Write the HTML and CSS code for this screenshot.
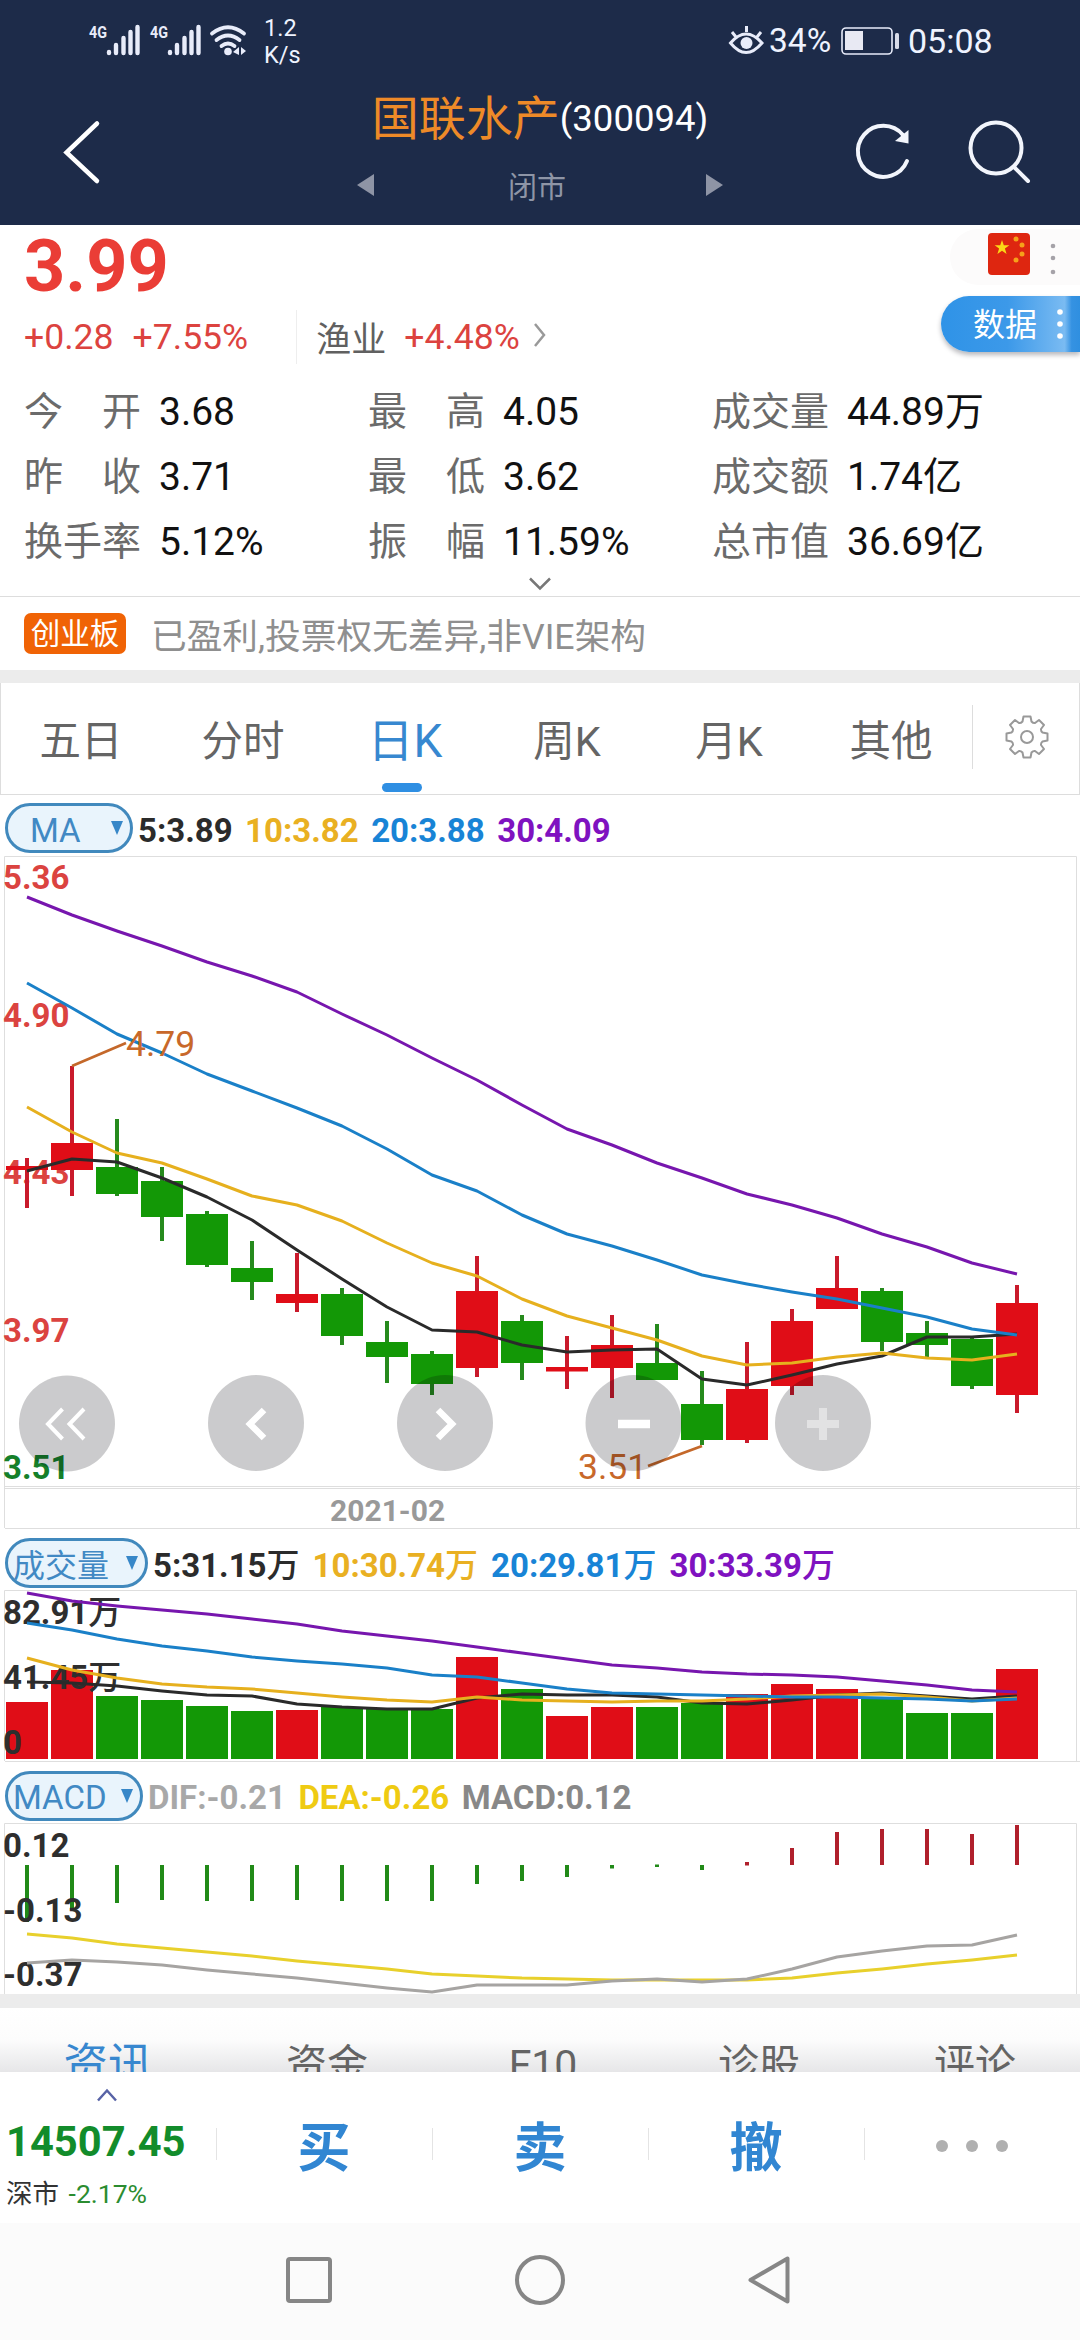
FILE: index.html
```html
<!DOCTYPE html>
<html lang="zh-CN">
<head>
<meta charset="utf-8">
<title>国联水产(300094)</title>
<link rel="stylesheet" href="styles.css">
</head>
<body>
<div class="screen">
  <header class="header">
    <div class="status">
      <svg class="status-icons" viewBox="84 16 166 48" width="166" height="48">
        <g class="net-label"><text x="89" y="38" textLength="18" lengthAdjust="spacingAndGlyphs">4G</text><text x="150" y="38" textLength="18" lengthAdjust="spacingAndGlyphs">4G</text></g>
        <path class="bars" d="M109 52V53M116 45V53M123.500 38V53M130.500 32V53M137.500 27V53M170 52V53M177 45V53M184.500 38V53M191.500 32V53M198.500 27V53"/>
        <path class="wifi" d="M212 33.500Q228 21 244 33.500M216.500 40Q228 31 239.500 40M221.500 46Q228 41 234.500 46"/>
        <circle cx="228" cy="51.500" r="3.800" fill="#e8ecfa"/>
        <path d="M239 47V55L233 52ZM241 47L246 51L241 55Z" fill="#e8ecfa"/>
      </svg>
      <div class="speed"><span>1.2</span><span>K/s</span></div>
      <svg class="eye" viewBox="726 24 38 32" width="38" height="32" fill="none" stroke="#e8ecfa" stroke-width="3">
        <path d="M729.500 43Q745 25 761 43Q745 62 729.500 43ZM745.500 26V32M731 32L735 37M760 32L756 37"/>
        <circle cx="745.500" cy="43" r="6" fill="#e8ecfa" stroke="none"/>
      </svg>
      <span class="battery-text">34%</span>
      <svg class="battery" viewBox="838 24 62 34" width="62" height="34">
        <rect x="841" y="28" width="50" height="26" rx="4" fill="none" stroke="#e8ecfa" stroke-width="1.600"/>
        <rect x="844" y="31" width="18" height="19" fill="#e8e9f3"/>
        <rect x="894" y="33" width="4" height="16" rx="1.500" fill="#d8dbe8"/>
      </svg>
      <span class="clock">05:08</span>
    </div>
    <div class="titlebar">
      <svg class="back" viewBox="58 116 50 74" width="50" height="74"><path d="M97 123.500L66.500 152.500L97 181" fill="none" stroke="#fff" stroke-width="4.500" stroke-linecap="round"/></svg>
      <div class="titles">
        <div class="title"><b>国联水产</b><span>(300094)</span></div>
        <div class="session">
          <svg viewBox="0 0 17 22" width="17" height="22"><path d="M17 0V22L0 11Z" fill="#8e94a5"/></svg>
          <span>闭市</span>
          <svg viewBox="0 0 17 22" width="17" height="22"><path d="M0 0V22L17 11Z" fill="#8e94a5"/></svg>
        </div>
      </div>
      <svg class="actions" viewBox="850 116 186 74" width="186" height="74" fill="none" stroke="#f2f5fc" stroke-width="4">
        <path d="M907 161A25.500 25.500 0 1 1 903 135" stroke-linecap="round"/>
        <path d="M908.500 130V143.500L895 141Z" fill="#f2f5fc" stroke="none"/>
        <circle cx="996" cy="148" r="25.500"/>
        <path d="M1014 167L1028 181" stroke-linecap="round"/>
      </svg>
    </div>
  </header>

  <section class="quote">
    <div class="price">3.99</div>
    <div class="change">
      <span>+0.28</span><span class="pct">+7.55%</span>
      <i class="vline"></i>
      <span class="sector">渔业</span><span>+4.48%</span>
      <svg viewBox="0 0 14 26" width="14" height="26"><path d="M2 2L11 13L2 24" fill="none" stroke="#999" stroke-width="2.500"/></svg>
    </div>
    <dl class="stats">
      <div><dt><span>今</span><span>开</span></dt><dd>3.68</dd></div>
      <div><dt><span>最</span><span>高</span></dt><dd>4.05</dd></div>
      <div><dt>成交量</dt><dd>44.89万</dd></div>
      <div><dt><span>昨</span><span>收</span></dt><dd>3.71</dd></div>
      <div><dt><span>最</span><span>低</span></dt><dd>3.62</dd></div>
      <div><dt>成交额</dt><dd>1.74亿</dd></div>
      <div><dt>换手率</dt><dd>5.12%</dd></div>
      <div><dt><span>振</span><span>幅</span></dt><dd>11.59%</dd></div>
      <div><dt>总市值</dt><dd>36.69亿</dd></div>
    </dl>
    <svg class="expand" viewBox="0 0 22 14" width="22" height="14"><path d="M1 1.500L11 11.500L21 1.500" fill="none" stroke="#777" stroke-width="2.500"/></svg>
    <div class="market-flag">
      <svg viewBox="0 0 42 42" width="42" height="42">
        <rect width="42" height="42" rx="4" fill="#de2610"/>
        <path d="M14 7l1.800 5.300h5.600l-4.500 3.300 1.700 5.400-4.600-3.300-4.600 3.300 1.700-5.400-4.500-3.300h5.600z" fill="#fbd916"/>
        <g fill="#f6a11a"><circle cx="28" cy="6" r="2.500"/><circle cx="34" cy="12" r="2.500"/><circle cx="34" cy="21" r="2.500"/><circle cx="28" cy="27" r="2.500"/></g>
      </svg>
      <svg viewBox="0 0 6 32" width="6" height="32" fill="#a5a2a8"><circle cx="3" cy="3" r="2.300"/><circle cx="3" cy="15" r="2.300"/><circle cx="3" cy="29" r="2.300"/></svg>
    </div>
    <div class="data-tab"><span>数据</span>
      <svg viewBox="0 0 6 30" width="6" height="30" fill="#fff"><circle cx="3" cy="3" r="2.800"/><circle cx="3" cy="15" r="2.800"/><circle cx="3" cy="27" r="2.800"/></svg>
    </div>
  </section>

  <section class="board"><span class="badge">创业板</span><span>已盈利,投票权无差异,非VIE架构</span></section>

  <nav class="periods">
    <div>五日</div><div>分时</div><div class="active">日K</div><div>周K</div><div>月K</div><div>其他</div>
    <div class="gear">
      <svg viewBox="-23 -23 46 46" width="46" height="46" fill="none" stroke="#999" stroke-width="2" stroke-linejoin="round">
        <path d="M-4.500 -15.500L-3.500 -20.500H3.500L4.500 -15.500Q6 -13.800 8 -14L12 -17L17 -12L14 -8Q13.800 -6 15.500 -4.500L20.500 -3.500V3.500L15.500 4.500Q13.800 6 14 8L17 12L12 17L8 14Q6 13.800 4.500 15.500L3.500 20.500H-3.500L-4.500 15.500Q-6 13.800 -8 14L-12 17L-17 12L-14 8Q-13.800 6 -15.500 4.500L-20.500 3.500V-3.500L-15.500 -4.500Q-13.800 -6 -14 -8L-17 -12L-12 -17L-8 -14Q-6 -13.800 -4.500 -15.500Z"/>
        <circle r="6"/>
      </svg>
    </div>
  </nav>

  <div class="legend ma">
    <div class="pill pill-ma"><span>MA</span><i></i></div>
    <span class="k">5:3.89</span><span class="y">10:3.82</span><span class="b">20:3.88</span><span class="p">30:4.09</span>
  </div>
  <svg class="chart" viewBox="0 856 1080 676" width="1080" height="676">
    <path class="frame" d="M4.500 1528V856.500H1076.500V1528M5 1486.500H1080M5 1488.500H1080M5 1528.500H1080"/>
    <g class="axis"><text x="3" y="888.500" class="rise">5.36</text><text x="3" y="1027" class="rise">4.90</text><text x="3" y="1184" class="rise">4.43</text><text x="3" y="1342" class="rise">3.97</text><text x="3" y="1479" class="fall">3.51</text></g>
    <path class="up wick" d="M27 1158V1208M72 1066V1196M297 1253V1312M477 1256V1377M567 1336V1389M612 1315V1398M747 1342V1443M792 1309V1395M837 1256V1309M1017 1285V1413"/>
    <path class="up body" d="M27 1166V1170M72 1143V1170M297 1294V1303M477 1291V1368M567 1367V1371.500M612 1345V1368M747 1389V1440M792 1321V1386M837 1288V1309M1017 1303V1395"/>
    <path class="down wick" d="M117 1119V1196M162 1167V1241M207 1211V1267M252 1241V1300M342 1288V1345M387 1321V1383M432 1351V1395M522 1315V1380M657 1324V1380M702 1371V1445M882 1288V1351M927 1321V1358M972 1338V1389"/>
    <path class="down body" d="M117 1167V1194M162 1181V1217M207 1214V1265M252 1268V1282M342 1294V1336M387 1342V1357M432 1354V1384M522 1321V1363M657 1363V1380M702 1404V1440M882 1291V1342M927 1333V1345M972 1339V1386"/>
    <polyline class="line k" points="27,1171 72,1159 117,1162 162,1178 207,1197 252,1220 297,1250 342,1279 387,1307 432,1330 477,1332 522,1345 567,1352 612,1350 657,1349 702,1379 747,1385 792,1375 837,1364 882,1356 927,1337 972,1337 1017,1334"/>
    <polyline class="line y" points="27,1107 72,1132 117,1153 162,1163 207,1179 252,1196 297,1205 342,1221 387,1243 432,1263 477,1276 522,1299 567,1316 612,1328 657,1340 702,1356 747,1365 792,1363 837,1357 882,1353 927,1358 972,1360 1017,1354"/>
    <polyline class="line b" points="27,983 72,1008 117,1034 162,1053 207,1074 252,1091 297,1108 342,1126 387,1149 432,1175 477,1191 522,1215 567,1234 612,1246 657,1260 702,1275 747,1284 792,1292 837,1299 882,1308 927,1317 972,1329 1017,1335"/>
    <polyline class="line p" points="27,897 72,915 117,931 162,946 207,962 252,976 297,992 342,1014 387,1035 432,1058 477,1080 522,1105 567,1129 612,1145 657,1163 702,1178 747,1194 792,1205 837,1218 882,1234 927,1247 972,1263 1017,1274"/>
    <path class="leader" d="M72 1066L126 1043M702 1446L648 1466"/>
    <g class="mark"><text x="126" y="1056">4.79</text><text x="578" y="1479">3.51</text></g>
    <g class="knobs"><circle cx="67" cy="1423.500" r="48"/><circle cx="256" cy="1423" r="48"/><circle cx="445" cy="1423" r="48"/><circle cx="633.500" cy="1423" r="48"/><circle cx="823" cy="1423" r="48"/></g>
    <path d="M62.500 1409L48 1424L62.500 1439M84 1409L69.500 1424L84 1439" fill="none" stroke="#fff" stroke-width="4"/>
    <path d="M264 1410L250 1424L264 1438M438 1410L452 1424L438 1438" fill="none" stroke="#fff" stroke-width="6.500"/>
    <path d="M618 1424H650" stroke="#fff" stroke-width="8.500"/>
    <path d="M807 1424H839M823 1408V1440" stroke="#e2e2e3" stroke-width="8"/>
    <text class="month" x="330" y="1521">2021-02</text>
  </svg>

  <div class="legend vol">
    <div class="pill pill-vol"><span>成交量</span><i></i></div>
    <span class="k">5:31.15<em>万</em></span><span class="y">10:30.74<em>万</em></span><span class="b">20:29.81<em>万</em></span><span class="p">30:33.39<em>万</em></span>
  </div>
  <svg class="chart" viewBox="0 1590 1080 174" width="1080" height="174">
    <path class="frame" d="M4.500 1761V1590.500H1076.500V1761M5 1761.500H1080"/>
    <path class="up body" d="M27 1702V1759M72 1670V1759M297 1710V1759M477 1657V1759M567 1716V1759M612 1707V1759M747 1694V1759M792 1684V1759M837 1689V1759M1017 1669V1759"/>
    <path class="down body" d="M117 1696V1759M162 1700V1759M207 1706V1759M252 1711V1759M342 1707V1759M387 1709V1759M432 1709V1759M522 1689V1759M657 1707V1759M702 1703V1759M882 1699V1759M927 1713V1759M972 1713V1759"/>
    <g class="axis"><text x="3" y="1624">82.91<tspan>万</tspan></text><text x="3" y="1689">41.45<tspan>万</tspan></text><text x="3" y="1753.500">0</text></g>
    <polyline class="line k" points="27,1682 72,1683 117,1686 162,1691 207,1695 252,1696 297,1704 342,1707 387,1709 432,1709 477,1698 522,1694 567,1695 612,1695 657,1697 702,1703 747,1704 792,1700 837,1695 882,1693 927,1696 972,1699 1017,1696"/>
    <polyline class="line y" points="27,1658 72,1670 117,1678 162,1684 207,1687 252,1689 297,1693 342,1697 387,1700 432,1702 477,1697 522,1700 567,1701 612,1702 657,1701 702,1701 747,1699 792,1696 837,1695 882,1694 927,1697 972,1701 1017,1698"/>
    <polyline class="line b" points="27,1623 72,1630 117,1639 162,1646 207,1651 252,1657 297,1661 342,1664 387,1668 432,1675 477,1677 522,1683 567,1689 612,1693 657,1694 702,1695 747,1696 792,1697 837,1697 882,1698 927,1699 972,1701 1017,1699"/>
    <polyline class="line p" points="27,1593 72,1601 117,1606 162,1610 207,1614 252,1619 297,1624 342,1631 387,1636 432,1641 477,1647 522,1653 567,1659 612,1665 657,1668 702,1672 747,1674 792,1675 837,1677 882,1681 927,1685 972,1690 1017,1692"/>
  </svg>

  <div class="legend macd">
    <div class="pill pill-macd"><span>MACD</span><i></i></div>
    <span class="dif">DIF:-0.21</span><span class="dea">DEA:-0.26</span><span class="bar">MACD:0.12</span>
  </div>
  <svg class="chart" viewBox="0 1823 1080 171" width="1080" height="171">
    <path class="frame" d="M4.500 1994V1823.500H1076.500V1994"/>
    <path class="down stick" d="M27 1865V1922M72 1865V1910M117 1865V1903M162 1865V1900M207 1865V1901M252 1865V1901M297 1865V1900M342 1865V1901M387 1865V1901M432 1865V1901M477 1865V1884M522 1865V1881M567 1865V1877M612 1865V1868.500M657 1864.500V1867M702 1865V1870"/>
    <path class="up stick" d="M747 1862V1865.500M792 1848V1865M837 1832V1865M882 1829V1865M927 1829V1865M972 1834V1865M1017 1825V1865"/>
    <g class="axis"><text x="3" y="1857">0.12</text><text x="3" y="1922">-0.13</text><text x="3" y="1986">-0.37</text></g>
    <polyline class="line dea" points="27,1934 72,1938 117,1944 162,1948 207,1952 252,1956 297,1961 342,1965 387,1969 432,1974 477,1976 522,1978 567,1979 612,1980 657,1980 702,1980 747,1980 792,1978 837,1973 882,1969 927,1964 972,1960 1017,1955"/>
    <polyline class="line dif" points="27,1963 72,1960 117,1962 162,1965 207,1970 252,1974 297,1978 342,1983 387,1988 432,1992 477,1985 522,1985 567,1985 612,1981 657,1979 702,1982 747,1979 792,1969 837,1957 882,1951 927,1946 972,1945 1017,1935"/>
  </svg>

  <nav class="info-tabs"><div class="active">资讯</div><div>资金</div><div>F10</div><div>诊股</div><div>评论</div></nav>

  <footer class="trade">
    <div class="index">
      <svg viewBox="0 0 22 14" width="22" height="14"><path d="M2 12.500L11 2.500L20 12.500" fill="none" stroke="#5863a6" stroke-width="2.500"/></svg>
      <strong>14507.45</strong>
      <span>深市 <i>-2.17%</i></span>
    </div>
    <div class="act">买</div><div class="act">卖</div><div class="act">撤</div>
    <div class="more"><i></i><i></i><i></i></div>
  </footer>

  <svg class="sysnav" viewBox="0 2223 1080 117" width="1080" height="117" fill="none" stroke="#868686" stroke-width="4">
    <rect x="288" y="2259" width="42" height="42" rx="2"/>
    <circle cx="540" cy="2280" r="23"/>
    <path d="M787.500 2258.500V2301.500L750.500 2280Z" stroke-linejoin="round"/>
  </svg>
</div>
</body>
</html>
```
FILE: styles.css
```css
* { box-sizing: border-box; }
body {
  margin: 0;
  background: #fff;
  font-family: Roboto, "Noto Sans CJK SC", sans-serif;
}
svg { display: block; flex: none; }
i, em, b { font-style: normal; font-weight: inherit; }
.screen { width: 1080px; height: 2340px; overflow: hidden; display: flex; flex-direction: column; background: #fff; }
.screen > * { flex: none; }

/* header */
.header { height: 225px; background: #1d2b49; color: #eef3ff; }
.status { display: flex; height: 80px; padding-left: 84px; align-items: flex-start; }
.status-icons { margin-top: 16px; }
.net-label { font: 700 17px Roboto, sans-serif; fill: #e8ecfa; }
.bars { stroke: #e8ecfa; stroke-width: 4.4; stroke-linecap: round; }
.wifi { fill: none; stroke: #e8ecfa; stroke-width: 3.8; stroke-linecap: round; }
.speed { width: 60px; margin: 15px 0 0 14px; display: flex; flex-direction: column; font-size: 23.500px; line-height: 27px; }
.eye { margin: 24px 0 0 403px; }
.battery-text { width: 70px; margin: 21px 0 0 4px; font-size: 33.500px; line-height: 40px; }
.battery { margin-top: 24px; }
.clock { margin: 21px 0 0 7px; font-size: 34px; line-height: 40px; }
.titlebar { display: flex; height: 145px; padding-left: 58px; }
.back { margin-top: 36px; }
.titles { width: 432px; margin-left: 216px; display: flex; flex-direction: column; align-items: center; }
.title { display: flex; align-items: flex-start; height: 74px; line-height: 76px; white-space: nowrap; margin-top: 1px; }
.title b { color: #ee8a28; font-size: 47px; }
.title span { color: #fff; font-size: 36.500px; }
.session { display: flex; align-items: center; justify-content: space-between; width: 366px; height: 60px; font-size: 29px; color: #8e95a6; }
.session span { margin-left: -6px; }
.actions { margin: 36px 0 0 94px; }

/* quote */
.quote { position: relative; height: 372px; border-bottom: 1px solid #ddd; }
.price { height: 74px; padding: 5px 0 0 24px; font-size: 72px; line-height: 74px; font-weight: 700; color: #ea3d36; }
.change { display: flex; align-items: center; height: 70px; padding: 5px 0 0 24px; font-size: 35.600px; color: #dc433f; white-space: nowrap; }
.change .pct { margin-left: 19px; }
.change .vline { width: 1px; height: 54px; margin: 0 19px 0 48px; background: #eee; }
.change .sector { color: #606060; margin-right: 18px; font-size: 35px; }
.change svg { margin: -3px 0 0 13px; }
.stats { display: grid; grid-template-columns: 344px 344px 1fr; grid-auto-rows: 65px; margin: 11px 0 0; padding-left: 24px; font-size: 39px; line-height: 65px; }
.stats div { display: flex; }
.stats dt { width: 117px; display: flex; justify-content: space-between; color: #6b6b6b; }
.stats dd { margin: 0 0 0 18px; color: #111; }
.expand { position: absolute; left: 529px; top: 352px; }
.market-flag { position: absolute; right: 0; top: 4px; width: 130px; height: 56px; border-radius: 28px 0 0 28px; background: #fcfbfb; display: flex; padding: 4px 0 0 38px; gap: 20px; }
.market-flag svg + svg { margin-top: 10px; }
.data-tab { position: absolute; right: 0; top: 71px; width: 139px; height: 56px; border-radius: 28px 0 0 28px; display: flex; align-items: center; padding-left: 32px; color: #fff; font-size: 32px; background: linear-gradient(90deg, #2f93e7 0, #3c99e9 48%, #7abbf2 89%, #3592e2 94%, #2f8fe0); box-shadow: 0 3px 5px #b8b8bc; }
.data-tab span { margin-top: -4px; }
.data-tab svg { margin-left: 20px; }

.board { display: flex; align-items: center; height: 73px; padding: 0 0 0 24px; font-size: 35.700px; color: #8f8f8f; gap: 25px; white-space: nowrap; }
.badge { width: 102px; height: 41px; border-radius: 7px; background: #f06305; color: #fff; font-size: 29.500px; line-height: 42px; text-align: center; }

/* period tabs */
.periods { height: 125px; display: grid; grid-template-columns: repeat(6, 162px) 1fr; border-top: 13px solid #ececec; border-bottom: 1px solid #ddd; box-shadow: inset 1px 0 #ddd, inset -1px 0 #ddd; font-size: 41.500px; line-height: 117px; text-align: center; color: #656565; }
.periods div { height: 111px; }
.periods .active { position: relative; font-size: 46px; color: #3788d0; }
.periods .active::after { content: ""; position: absolute; left: 58px; bottom: 2px; width: 40px; height: 9px; border-radius: 5px; background: #2f8fe3; }
.periods .gear { height: 64px; margin-top: 22px; border-left: 1px solid #ddd; padding: 9px 0 0 31px; }

/* indicator legends */
.legend { display: flex; align-items: center; padding-left: 5px; font-size: 33px; font-weight: 700; line-height: 50px; white-space: nowrap; }
.legend.ma { height: 61px; padding-top: 5px; }
.legend.vol { height: 58px; padding-top: 4px; }
.legend.macd { height: 59px; padding-top: 4px; }
.legend > span { padding-top: 5px; }
.legend em { font-weight: 500; }
.pill { height: 50px; border: 3px solid #4189bd; border-radius: 25px; background: #e9f4fc; display: flex; align-items: center; justify-content: space-between; font-weight: 400; color: #4189c4; line-height: 46px; margin-right: 5px; }
.pill span { padding-top: 5px; }
.pill i { width: 0; height: 0; border: 6px solid transparent; border-bottom: 0; border-top: 14px solid #3787c8; }
.pill-ma { width: 128px; padding: 0 7px 0 22px; }
.pill-vol { width: 143px; padding: 0 7px 0 5px; font-size: 32px; }
.pill-macd { width: 138px; padding: 0 7px 0 5px; }
.ma .y, .ma .b, .ma .p { margin-left: 12.500px; }
.vol .y, .vol .b, .vol .p { margin-left: 13px; }
.dea, .bar { margin-left: 12.500px; }
span.k { color: #2b2b2b; }
span.y { color: #e9b022; }
span.b { color: #1884d6; }
span.p { color: #7f12c0; }
span.dif { color: #a8a8a8; }
span.dea { color: #efcb13; }
span.bar { color: #888; }

/* charts */
.frame { fill: none; stroke: #dedede; stroke-width: 1; }
.axis { font-size: 33px; font-weight: 700; fill: #2e2e2e; }
.axis tspan { font-weight: 500; }
.axis .rise { fill: #db4340; }
.axis .fall { fill: #15802a; }
.up { stroke: #e00d17; }
.down { stroke: #139806; }
.up.wick { stroke: #c91a2b; }
.down.wick { stroke: #268a1d; }
.wick { stroke-width: 4; }
.body { stroke-width: 42; }
.stick { stroke-width: 4; }
.up.stick { stroke: #b0202c; }
.down.stick { stroke: #218a18; }
.line { fill: none; stroke-width: 3; stroke-linejoin: round; }
.line.k { stroke: #2a2a2a; }
.line.y { stroke: #e6b01e; }
.line.b { stroke: #1a80c8; }
.line.p { stroke: #7716ae; }
.line.dea { stroke: #e8d02c; }
.line.dif { stroke: #a6a4a2; }
.leader { fill: none; stroke: #c4682a; stroke-width: 2.800; }
.mark { font-size: 35.500px; fill: #c8682a; }
.knobs { fill: rgba(0, 0, 8, .205); }
.month { font-size: 30px; font-weight: 700; fill: #999; }

/* bottom */
.info-tabs { height: 78px; overflow: hidden; display: grid; grid-template-columns: repeat(5, 216px); border-top: 14px solid #ececec; background: linear-gradient(#fff 0, #fcfcfc 50%, #e6e6e8 100%); font-size: 41px; line-height: 60px; text-align: center; color: #646464; }
.info-tabs div { padding: 27px 0 0 6px; }
.info-tabs .active { padding-left: 0; font-size: 44.500px; color: #3787cf; }
.trade { display: grid; grid-template-columns: repeat(5, 216px); height: 151px; }
.trade > div { background: linear-gradient(#e4e4e4, #e4e4e4) 0 56px / 1px 32px no-repeat; }
.trade .index { display: flex; flex-direction: column; padding: 16px 0 0 6px; background: none; white-space: nowrap; }
.index svg { margin-left: 90px; }
.index strong { margin-top: 15px; font-size: 41.700px; line-height: 50px; color: #128c2b; }
.index span { margin-top: 12px; font-size: 26.500px; line-height: 30px; color: #333; }
.index i { color: #2b8c30; margin-left: 3px; }
.act { text-align: center; font-size: 53px; font-weight: 700; line-height: 154px; color: #3186d2; }
.more { display: flex; justify-content: center; padding-top: 68px; gap: 18px; }
.more i { width: 12px; height: 12px; border-radius: 50%; background: #b0b0b0; }
.sysnav { background: #fbfbfb; }
```
